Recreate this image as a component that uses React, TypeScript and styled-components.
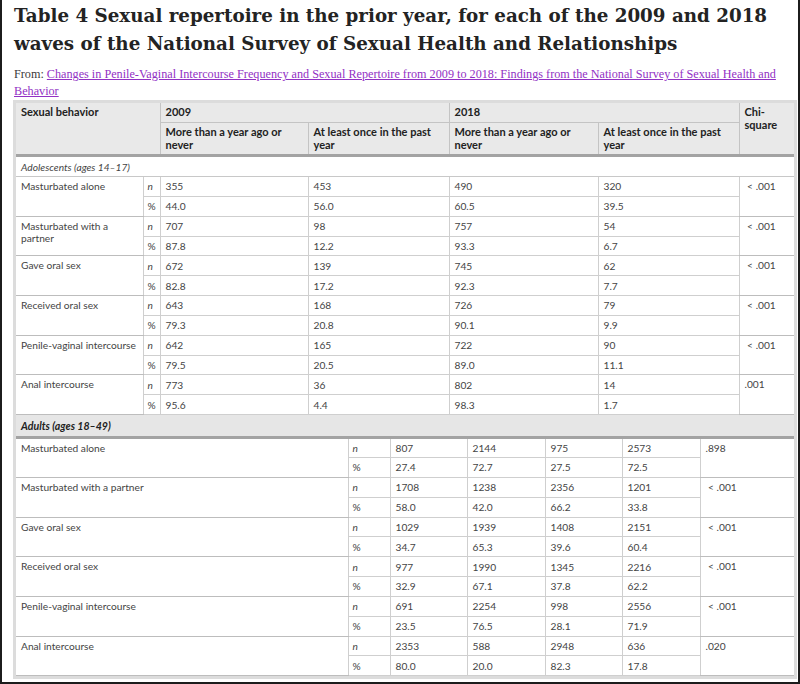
import React from "react";
import styled, { createGlobalStyle } from "styled-components";

type Row = {
  label: string;
  n: string[];
  pct: string[];
  chi: string;
};

const adolescents: Row[] = [
  { label: "Masturbated alone", n: ["355", "453", "490", "320"], pct: ["44.0", "56.0", "60.5", "39.5"], chi: "\u00a0< .001" },
  { label: "Masturbated with a partner", n: ["707", "98", "757", "54"], pct: ["87.8", "12.2", "93.3", "6.7"], chi: "\u00a0< .001" },
  { label: "Gave oral sex", n: ["672", "139", "745", "62"], pct: ["82.8", "17.2", "92.3", "7.7"], chi: "\u00a0< .001" },
  { label: "Received oral sex", n: ["643", "168", "726", "79"], pct: ["79.3", "20.8", "90.1", "9.9"], chi: "\u00a0< .001" },
  { label: "Penile-vaginal intercourse", n: ["642", "165", "722", "90"], pct: ["79.5", "20.5", "89.0", "11.1"], chi: "\u00a0< .001" },
  { label: "Anal intercourse", n: ["773", "36", "802", "14"], pct: ["95.6", "4.4", "98.3", "1.7"], chi: ".001" },
];

const adults: Row[] = [
  { label: "Masturbated alone", n: ["807", "2144", "975", "2573"], pct: ["27.4", "72.7", "27.5", "72.5"], chi: ".898" },
  { label: "Masturbated with a partner", n: ["1708", "1238", "2356", "1201"], pct: ["58.0", "42.0", "66.2", "33.8"], chi: "\u00a0< .001" },
  { label: "Gave oral sex", n: ["1029", "1939", "1408", "2151"], pct: ["34.7", "65.3", "39.6", "60.4"], chi: "\u00a0< .001" },
  { label: "Received oral sex", n: ["977", "1990", "1345", "2216"], pct: ["32.9", "67.1", "37.8", "62.2"], chi: "\u00a0< .001" },
  { label: "Penile-vaginal intercourse", n: ["691", "2254", "998", "2556"], pct: ["23.5", "76.5", "28.1", "71.9"], chi: "\u00a0< .001" },
  { label: "Anal intercourse", n: ["2353", "588", "2948", "636"], pct: ["80.0", "20.0", "82.3", "17.8"], chi: ".020" },
];

const teenCols = [127, 17, 148, 141, 149, 141, 55];
const adultCols = [332, 42, 77, 78, 77, 78, 94];

const GlobalStyle = createGlobalStyle`
  html, body {
    margin: 0;
    padding: 0;
    background: #fff;
  }
`;

const App: React.FC = () => {
  return (
    <>
      <GlobalStyle />
      <Frame>
        <Title>
          Table 4 Sexual repertoire in the prior year, for each of the 2009 and 2018 waves of the
          National Survey of Sexual Health and Relationships
        </Title>
        <Source>
          From:{" "}
          <SourceLink href="#">
            Changes in Penile-Vaginal Intercourse Frequency and Sexual Repertoire from 2009 to
            2018: Findings from the National Survey of Sexual Health and Behavior
          </SourceLink>
        </Source>

        <TableBox>
          <Table>
            <ColGroup widths={teenCols} />
            <thead>
              <tr>
                <HeadCell colSpan={2} rowSpan={2}>Sexual behavior</HeadCell>
                <HeadCell colSpan={2} $split>2009</HeadCell>
                <HeadCell colSpan={2} $split>2018</HeadCell>
                <HeadCell rowSpan={2} $last>Chi-square</HeadCell>
              </tr>
              <tr>
                <HeadCell>More than a year ago or never</HeadCell>
                <HeadCell>At least once in the past year</HeadCell>
                <HeadCell>More than a year ago or never</HeadCell>
                <HeadCell>At least once in the past year</HeadCell>
              </tr>
            </thead>
            <tbody>
              <tr>
                <GroupCell colSpan={7}>Adolescents (ages 14–17)</GroupCell>
              </tr>
              {adolescents.map((row) => (
                <BehaviorRows key={row.label} row={row} />
              ))}
            </tbody>
          </Table>

          <Table>
            <ColGroup widths={adultCols} />
            <tbody>
              <tr>
                <AdultGroupCell colSpan={7}>Adults (ages 18–49)</AdultGroupCell>
              </tr>
              {adults.map((row) => (
                <BehaviorRows key={row.label} row={row} />
              ))}
            </tbody>
          </Table>
        </TableBox>
      </Frame>
    </>
  );
};

const ColGroup: React.FC<{ widths: number[] }> = ({ widths }) => (
  <colgroup>
    {widths.map((w, i) => (
      <Col key={i} $w={w} />
    ))}
  </colgroup>
);

const BehaviorRows: React.FC<{ row: Row }> = ({ row }) => (
  <>
    <SubRow>
      <LabelCell rowSpan={2}>{row.label}</LabelCell>
      <UnitCell>
        <i>n</i>
      </UnitCell>
      {row.n.map((v, i) => (
        <Cell key={i}>{v}</Cell>
      ))}
      <ChiCell rowSpan={2}>{row.chi}</ChiCell>
    </SubRow>
    <SubRow>
      <UnitCell>%</UnitCell>
      {row.pct.map((v, i) => (
        <Cell key={i}>{v}</Cell>
      ))}
    </SubRow>
  </>
);

const Frame = styled.main`
  width: 800px;
  height: 684px;
  box-sizing: border-box;
  overflow: hidden;
  border: 2px solid #1c1c1c;
  border-top: none;
  padding: 0 0 0 12px;
  background: #fff;
`;

const Title = styled.h1`
  margin: 0;
  padding-top: 2px;
  font-family: "DejaVu Serif", "Liberation Serif", serif;
  font-weight: 700;
  font-size: 18.3px;
  line-height: 28px;
  color: #232323;
  width: 780px;
`;

const Source = styled.p`
  margin: 8px 0 0 0;
  font-family: "Liberation Serif", "DejaVu Serif", serif;
  font-size: 12.2px;
  line-height: 17px;
  color: #3a3a3a;
  width: 780px;
`;

const SourceLink = styled.a`
  color: #9231c4;
  text-decoration: underline;
`;

const TableBox = styled.div`
  margin-left: -1px;
  width: 784px;
  box-sizing: border-box;
  border: 3px solid #dcdcdc;
  background: #fff;
`;

const Table = styled.table`
  width: 100%;
  table-layout: fixed;
  border-collapse: collapse;
  font-family: Lato, "Liberation Sans", sans-serif;
  font-size: 10.2px;
  color: #444;
`;

const Col = styled.col<{ $w: number }>`
  width: ${({ $w }) => $w}px;
`;

const HeadCell = styled.th<{ $split?: boolean; $last?: boolean }>`
  background: #e9e9e9;
  color: #222;
  font-size: 11px;
  font-weight: 700;
  text-align: left;
  vertical-align: top;
  line-height: 12.5px;
  padding: 3px 5px 3px 5px;
  border-right: ${({ $last }) => ($last ? "none" : "1px solid #c4c4c4")};
  border-bottom: ${({ $split }) => ($split ? "1px solid #c4c4c4" : "none")};
  height: 13px;

  tr:last-child > & {
    height: 25px;
    border-bottom: 3px solid #a3a3a3;
  }

  tr:first-child > &[rowspan] {
    border-bottom: 3px solid #a3a3a3;
  }
`;

const GroupCell = styled.td`
  font-style: italic;
  height: 19px;
  padding: 0 5px;
  border-bottom: 1px solid #c8c8c8;
`;

const AdultGroupCell = styled(GroupCell)`
  background: #e6e6e6;
  color: #222;
  font-size: 10.6px;
  font-weight: 700;
  height: 21px;
  border-bottom: 3px solid #a3a3a3;
`;

const SubRow = styled.tr`
  height: 19.85px;
`;

const Cell = styled.td`
  padding: 0 5px;
  line-height: 12px;
  vertical-align: middle;
  border-right: 1px solid #cfcfcf;
  border-bottom: 1px solid #cfcfcf;
  white-space: nowrap;
`;

const LabelCell = styled(Cell)`
  vertical-align: top;
  padding: 3px 2px 0 5px;
  white-space: normal;
  border-bottom-color: #bdbdbd;
`;

const UnitCell = styled(Cell)`
  padding: 0 3px 0 4px;
`;

const ChiCell = styled(Cell)`
  vertical-align: top;
  padding-top: 3px;
  border-right: none;
  border-bottom-color: #bdbdbd;
`;

export default App;
